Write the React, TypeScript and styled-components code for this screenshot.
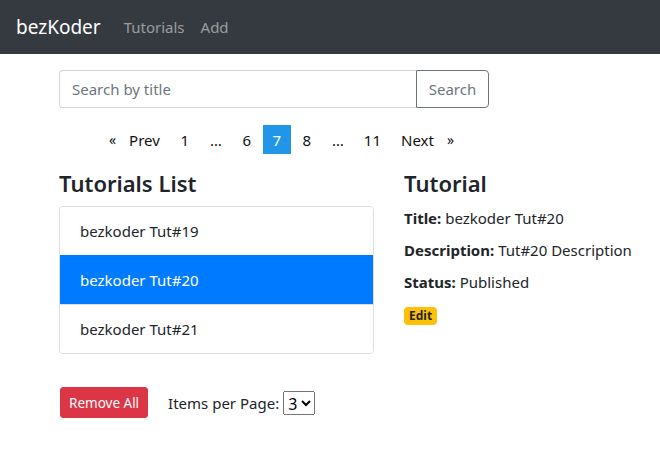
import React, { useState } from 'react';
import styled, { createGlobalStyle } from 'styled-components';

const GlobalStyle = createGlobalStyle`
  html, body {
    margin: 0;
    padding: 0;
    background: #fff;
  }
  body {
    font-family: "Noto Sans", "Open Sans", sans-serif;
    font-size: 15px;
    line-height: 24px;
    color: #212529;
    overflow: hidden;
  }
  * {
    box-sizing: border-box;
  }
`;

const tutorials = [
  { id: 19, title: 'bezkoder Tut#19', description: 'Tut#19 Description', published: true },
  { id: 20, title: 'bezkoder Tut#20', description: 'Tut#20 Description', published: true },
  { id: 21, title: 'bezkoder Tut#21', description: 'Tut#21 Description', published: false },
];

const pages: (number | string)[] = [1, '…', 6, 7, 8, '…', 11];

export default function App() {
  const [current, setCurrent] = useState(1);
  const [page, setPage] = useState(7);
  const [size, setSize] = useState(3);
  const selected = tutorials[current];

  return (
    <>
      <GlobalStyle />
      <Navbar>
        <Brand href="#">bezKoder</Brand>
        <NavLink href="#">Tutorials</NavLink>
        <NavLink href="#">Add</NavLink>
      </Navbar>

      <Container>
        <TopColumn>
          <InputGroup>
            <SearchInput placeholder="Search by title" />
            <SearchButton>Search</SearchButton>
          </InputGroup>

          <Pagination>
            <PageItem onClick={() => setPage(Math.max(1, page - 1))}>
              <Arrow>«</Arrow>Prev
            </PageItem>
            {pages.map((p, i) =>
              typeof p === 'number' ? (
                <PageItem key={i} $active={p === page} onClick={() => setPage(p)}>
                  {p}
                </PageItem>
              ) : (
                <PageGap key={i}>{p}</PageGap>
              )
            )}
            <PageItem onClick={() => setPage(Math.min(11, page + 1))}>
              Next<Arrow $right>»</Arrow>
            </PageItem>
          </Pagination>
        </TopColumn>

        <Columns>
          <div>
            <Heading>Tutorials List</Heading>
            <ListGroup>
              {tutorials.map((t, i) => (
                <ListItem key={t.id} $active={i === current} onClick={() => setCurrent(i)}>
                  {t.title}
                </ListItem>
              ))}
            </ListGroup>

            <Footer>
              <DangerButton>Remove All</DangerButton>
              <PerPage>
                Items per Page:
                <SizeSelect value={size} onChange={(e) => setSize(Number(e.target.value))}>
                  <option value={3}>3</option>
                  <option value={6}>6</option>
                  <option value={9}>9</option>
                </SizeSelect>
              </PerPage>
            </Footer>
          </div>

          <div>
            <Heading>Tutorial</Heading>
            <Field>
              <strong>Title:</strong> {selected.title}
            </Field>
            <Field>
              <strong>Description:</strong> {selected.description}
            </Field>
            <Field>
              <strong>Status:</strong> {selected.published ? 'Published' : 'Pending'}
            </Field>
            <Badge href="#">Edit</Badge>
          </div>
        </Columns>
      </Container>
    </>
  );
}

const Navbar = styled.nav`
  display: flex;
  align-items: center;
  height: 54px;
  padding: 0 16px;
  background-color: #343a40;
`;

const Brand = styled.a`
  color: #fff;
  font-size: 19px;
  line-height: 30px;
  margin-right: 15px;
  text-decoration: none;
`;

const NavLink = styled.a`
  color: rgba(255, 255, 255, 0.5);
  font-size: 15px;
  padding: 0 8px;
  text-decoration: none;
`;

const Container = styled.div`
  padding: 16px 0 0 59px;
`;

const TopColumn = styled.div`
  width: 430px;
`;

const InputGroup = styled.div`
  display: flex;
  height: 38px;
`;

const SearchInput = styled.input`
  flex: 1;
  min-width: 0;
  height: 38px;
  padding: 6px 12px;
  font: inherit;
  color: #495057;
  border: 1px solid #ced4da;
  border-right: none;
  border-radius: 4px 0 0 4px;
  outline: none;

  &::placeholder {
    color: #6c757d;
  }
`;

const SearchButton = styled.button`
  width: 73px;
  height: 38px;
  font: inherit;
  color: #6c757d;
  background: transparent;
  border: 1px solid #6c757d;
  border-radius: 0 4px 4px 0;
  cursor: pointer;
`;

const Pagination = styled.div`
  display: flex;
  justify-content: center;
  align-items: center;
  gap: 2px;
  margin-top: 17px;
  height: 29px;
  padding-left: 15px;
`;

const PageItem = styled.button<{ $active?: boolean }>`
  display: flex;
  align-items: center;
  justify-content: center;
  min-width: 28px;
  height: 29px;
  padding: 0 9px;
  font: inherit;
  color: ${(p) => (p.$active ? '#fff' : '#111')};
  background: ${(p) => (p.$active ? '#2196e8' : 'transparent')};
  border: none;
  cursor: pointer;
`;

const PageGap = styled.span`
  width: 30px;
  text-align: center;
  color: #111;
`;

const Arrow = styled.span<{ $right?: boolean }>`
  font-size: 14px;
  ${(p) => (p.$right ? 'margin-left: 13px;' : 'margin-right: 13px;')}
`;

const Columns = styled.div`
  display: grid;
  grid-template-columns: 315px 1fr;
  column-gap: 30px;
  margin-top: 15px;
`;

const Heading = styled.h4`
  margin: 0 0 8px;
  font-size: 22px;
  line-height: 29px;
  font-weight: 600;
  color: #212529;
`;

const ListGroup = styled.ul`
  margin: 0;
  padding: 0;
  list-style: none;
  border: 1px solid rgba(0, 0, 0, 0.125);
  border-radius: 4px;
  overflow: hidden;
`;

const ListItem = styled.li<{ $active?: boolean }>`
  padding: 12px 20px;
  line-height: 24px;
  color: ${(p) => (p.$active ? '#fff' : '#212529')};
  background: ${(p) => (p.$active ? '#007bff' : '#fff')};
  border-top: 1px solid ${(p) => (p.$active ? '#007bff' : 'rgba(0, 0, 0, 0.125)')};
  cursor: pointer;

  &:first-child {
    border-top: none;
  }
`;

const Footer = styled.div`
  display: flex;
  align-items: center;
  gap: 20px;
  margin-top: 33px;
  padding-left: 1px;
`;

const DangerButton = styled.button`
  height: 31px;
  padding: 0 8px;
  font: inherit;
  font-size: 13.5px;
  color: #fff;
  background: #dc3545;
  border: 1px solid #dc3545;
  border-radius: 3px;
  cursor: pointer;
`;

const PerPage = styled.label`
  display: flex;
  align-items: center;
  gap: 4px;
`;

const SizeSelect = styled.select`
  height: 24px;
  font: inherit;
  font-size: 16px;
  color: #000;
`;

const Field = styled.div`
  margin-bottom: 8px;
  line-height: 24px;

  strong {
    font-weight: 700;
  }
`;

const Badge = styled.a`
  display: inline-block;
  margin-top: 4px;
  padding: 2px 5px;
  font-size: 12px;
  font-weight: 700;
  line-height: 14px;
  color: #212529;
  background: #ffc107;
  border-radius: 4px;
  text-decoration: none;
`;
